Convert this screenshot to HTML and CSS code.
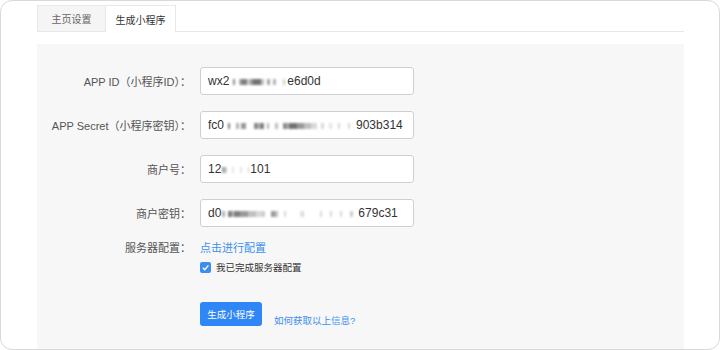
FILE: index.html
```html
<!DOCTYPE html>
<html lang="zh-CN">
<head>
    <meta charset="UTF-8">
    <meta name="viewport" content="width=device-width, initial-scale=1.0">
    <title>生成小程序</title>
    <link rel="stylesheet" href="styles.css">
</head>
<body>
    <div class="frame">
        <div class="tabs">
            <div class="tab">主页设置</div>
            <div class="tab active">生成小程序</div>
        </div>

        <div class="panel">
            <div class="row">
                <label>APP ID（小程序ID）：</label>
                <div class="input">wx2<span class="mask mask-appid"></span>e6d0d</div>
            </div>
            <div class="row">
                <label>APP Secret（小程序密钥）：</label>
                <div class="input">fc0<span class="mask mask-secret"></span>903b314</div>
            </div>
            <div class="row">
                <label>商户号：</label>
                <div class="input">12<span class="mask mask-mch"></span>101</div>
            </div>
            <div class="row">
                <label>商户密钥：</label>
                <div class="input">d0<span class="mask mask-key"></span>679c31</div>
            </div>
            <div class="row text-row">
                <label>服务器配置：</label>
                <div class="field">
                    <a href="#" class="link">点击进行配置</a>
                    <div class="check">
                        <span class="box">
                            <svg width="9" height="9" viewBox="0 0 10 10"><path d="M2 5.2 L4.2 7.4 L8.2 2.6" fill="none" stroke="#fff" stroke-width="1.5"/></svg>
                        </span>
                        我已完成服务器配置
                    </div>
                </div>
            </div>
            <div class="row actions">
                <label></label>
                <button class="btn">生成小程序</button>
                <a href="#" class="help">如何获取以上信息?</a>
            </div>
        </div>
    </div>
</body>
</html>
```

FILE: styles.css
```css
body {
    margin: 0;
    padding: 0;
    font-family: 'Liberation Sans', 'Noto Sans CJK SC', sans-serif;
    background-color: #fff;
    color: #555;
}

.frame {
    box-sizing: border-box;
    width: 720px;
    height: 350px;
    border: 1px solid #d9d9d9;
    border-radius: 12px;
    padding: 4px 35px 0 36px;
    overflow: hidden;
}

.tabs {
    display: flex;
    border-bottom: 1px solid #e8e8e8;
    height: 26px;
}

.tab {
    width: 69px;
    height: 26px;
    box-sizing: border-box;
    border: 1px solid #e8e8e8;
    border-bottom: none;
    background-color: #f5f5f5;
    font-size: 10px;
    color: #666;
    display: flex;
    align-items: center;
    justify-content: center;
}

.tab + .tab {
    border-left: none;
    width: 70px;
}

.tab.active {
    background-color: #fff;
    color: #333;
    height: 27px;
}

.panel {
    margin-top: 12px;
    background-color: #f7f7f7;
    padding: 23px 0 30px;
    height: 320px;
}

.row {
    display: flex;
    align-items: center;
    margin-bottom: 16px;
}

.row label {
    width: 154px;
    flex-shrink: 0;
    text-align: right;
    font-size: 11px;
    color: #555;
    margin-right: 9px;
}

.input {
    box-sizing: border-box;
    width: 214px;
    height: 28px;
    border: 1px solid #cfcfcf;
    border-radius: 3px;
    background-color: #fff;
    padding: 0 7px;
    font-size: 12px;
    color: #333;
    display: flex;
    align-items: center;
    white-space: nowrap;
    overflow: hidden;
}

/* blurred blocks standing in for the hidden part of each key */
.mask {
    display: inline-block;
    flex-shrink: 0;
    height: 6px;
    margin: 1px 1px 0;
    filter: blur(0.8px);
    opacity: 0.75;
}

.mask-appid {
    width: 56px;
    background: linear-gradient(90deg,
        transparent 0 3px, #666 3px 5px, transparent 5px 9px,
        #999 9px 11px, #555 11px 17px, #bbb 17px 20px,
        #777 20px 23px, #444 23px 31px, #aaa 31px 34px,
        transparent 34px 37px, #888 37px 40px, transparent 40px 43px,
        #999 43px 46px, transparent 46px 53px, #bbb 53px 55px, transparent 55px);
}

.mask-secret {
    width: 130px;
    background: linear-gradient(90deg,
        transparent 0 3px, #555 3px 5px, transparent 5px 11px,
        #999 11px 14px, transparent 14px 16px, #777 16px 21px,
        transparent 21px 29px, #666 29px 33px, #aaa 33px 35px,
        #555 35px 39px, transparent 39px 42px, #999 42px 44px,
        transparent 44px 50px, #aaa 50px 53px, transparent 53px 58px,
        #666 58px 62px, #999 62px 64px, #444 64px 72px,
        #777 72px 79px, #aaa 79px 86px, #ccc 86px 92px,
        transparent 92px 96px, #ccc 96px 99px, transparent 99px 104px,
        #ddd 104px 107px, transparent 107px 113px, #ccc 113px 115px,
        transparent 115px 123px, #ccc 123px 125px, transparent 125px);
}

.mask-mch {
    width: 27px;
    background: linear-gradient(90deg,
        #888 0 3px, #bbb 3px 5px, transparent 5px 10px,
        #ddd 10px 12px, transparent 12px 18px, #ddd 18px 20px,
        transparent 20px 26px, #bbb 26px 28px, transparent 28px);
}

.mask-key {
    width: 135px;
    background: linear-gradient(90deg,
        #999 0 3px, transparent 3px 6px, #555 6px 10px,
        #aaa 10px 12px, #555 12px 18px, #777 18px 26px,
        #aaa 26px 34px, #ccc 34px 40px, #bbb 40px 43px,
        transparent 43px 49px, #777 49px 53px, #aaa 53px 56px,
        transparent 56px 62px, #ccc 62px 64px, transparent 64px 78px,
        #ddd 78px 80px, #ccc 80px 82px, transparent 82px 98px,
        #ccc 98px 100px, transparent 100px 108px, #ccc 108px 110px,
        transparent 110px 118px, #ccc 118px 120px, transparent 120px 128px,
        #bbb 128px 131px, transparent 131px);
}

.text-row {
    align-items: flex-start;
    margin-top: -4px;
}

.text-row label {
    line-height: 18px;
}

.field {
    display: flex;
    flex-direction: column;
}

.link {
    color: #3b8ff0;
    text-decoration: none;
    font-size: 11px;
    line-height: 18px;
}

.check {
    display: flex;
    align-items: center;
    margin-top: 3px;
    font-size: 9.5px;
    color: #333;
}

.box {
    width: 11px;
    height: 11px;
    background-color: #3b8ef0;
    border-radius: 2px;
    margin-right: 5px;
    display: flex;
    align-items: center;
    justify-content: center;
}

.actions {
    margin-top: 28px;
    align-items: flex-start;
}

.btn {
    width: 62px;
    height: 24px;
    border: none;
    border-radius: 3px;
    background-color: #2f86f6;
    color: #fff;
    font-family: inherit;
    font-size: 9.5px;
    padding: 0;
    cursor: pointer;
}

.help {
    margin-left: 12px;
    margin-top: 11px;
    color: #3b8ff0;
    text-decoration: none;
    font-size: 9.5px;
}
```
